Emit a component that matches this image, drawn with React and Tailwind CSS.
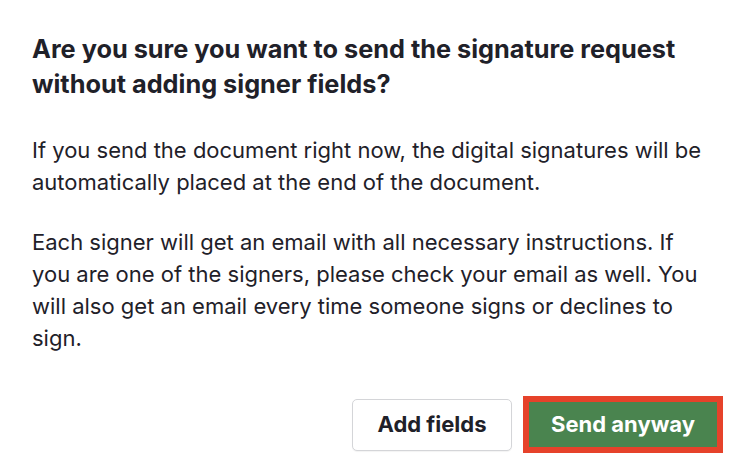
export default function App() {
  return (
    <div className="h-[476px] w-[746px] bg-white px-8 pt-[31px] text-[#1f2129] [font-family:Inter,'Liberation_Sans',sans-serif]">
      <h1 className="text-[25.3px] font-bold leading-[35px]">
        Are you sure you want to send the signature request without adding signer fields?
      </h1>
      <p className="mt-[33px] text-[22px] leading-[32px]">
        If you send the document right now, the digital signatures will be automatically placed at the end of the document.
      </p>
      <p className="mt-7 text-[22px] leading-[32px]">
        Each signer will get an email with all necessary instructions. If you are one of the signers, please check your email as well. You will also get an email every time someone signs or declines to sign.
      </p>
      <div className="mt-[42px] flex items-center justify-end gap-[11px]">
        <button type="button" className="h-[52px] w-[160px] rounded-[5px] border border-[#d4d5d8] bg-white text-[22px] font-bold text-[#1f2129] shadow-[0_1px_1px_rgba(0,0,0,0.05)]">
          Add fields
        </button>
        <button type="button" className="-mr-[9px] h-[57px] w-[200px] border-[6px] border-[#e6422a] bg-[#4a844f] text-[22px] font-bold text-white">
          Send anyway
        </button>
      </div>
    </div>
  );
}
